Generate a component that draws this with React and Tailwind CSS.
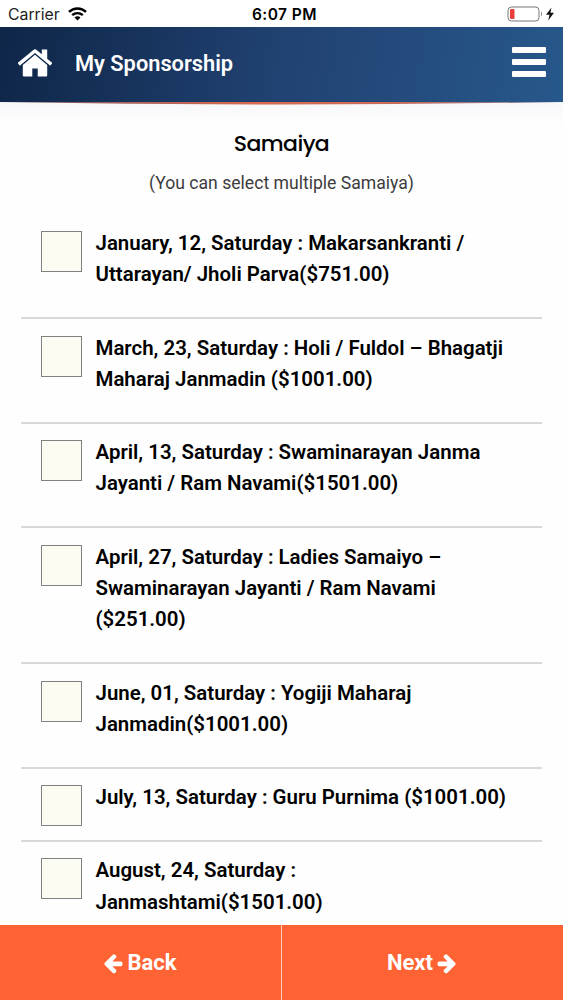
const events = [
  ['January, 12, Saturday : Makarsankranti /', 'Uttarayan/ Jholi Parva($751.00)'],
  ['March, 23, Saturday : Holi / Fuldol – Bhagatji', 'Maharaj Janmadin ($1001.00)'],
  ['April, 13, Saturday : Swaminarayan Janma', 'Jayanti / Ram Navami($1501.00)'],
  ['April, 27, Saturday : Ladies Samaiyo –', 'Swaminarayan Jayanti / Ram Navami', '($251.00)'],
  ['June, 01, Saturday : Yogiji Maharaj', 'Janmadin($1001.00)'],
  ['July, 13, Saturday : Guru Purnima ($1001.00)'],
  ['August, 24, Saturday :', 'Janmashtami($1501.00)'],
];

function ArrowIcon({ className = '' }) {
  return (
    <svg viewBox="0 0 1792 1792" className={`h-[22px] w-[22px] shrink-0 ${className}`} fill="currentColor">
      <path d="M1664 896v128q0 53-32.5 90.5t-84.5 37.5h-704l293 294q38 36 38 90t-38 90l-75 76q-37 37-90 37-52 0-91-37l-651-652q-37-37-37-90 0-52 37-91l651-650q38-38 91-38 52 0 90 38l75 74q38 38 38 91t-38 91l-293 293h704q52 0 84.5 37.5t32.5 90.5z" />
    </svg>
  );
}

function StatusBar() {
  return (
    <div className="flex h-[27px] shrink-0 items-center justify-between bg-white px-2 pt-[2px] font-['Inter',sans-serif] text-black">
      <div className="flex w-[160px] items-center gap-[8px]">
        <span className="text-[15.8px] text-[#222]">Carrier</span>
        <svg width="19" height="14" viewBox="0 0 19 14" fill="none" stroke="currentColor" className="-mt-[2px]">
          <path d="M1 4.9C5.8.3 13.2.3 18 4.9" strokeWidth="2.5" />
          <path d="M4.2 8.2c3-2.8 7.6-2.8 10.6 0" strokeWidth="2.4" />
          <path d="M9.5 13.5 6.5 10.4c1.7-1.6 4.3-1.6 6 0z" fill="currentColor" stroke="none" />
        </svg>
      </div>
      <span className="ml-[6px] text-center text-[15.5px] font-semibold tracking-[0.45px]">6:07 PM</span>
      <div className="-mt-[2px] flex w-[160px] justify-end">
        <svg width="49" height="16" viewBox="0 0 49 16" className="-mr-[1px]">
          <rect x="1" y="1" width="31" height="14" rx="3.5" fill="#fff" stroke="#777" />
          <rect x="3" y="3" width="4.5" height="10" rx="1" fill="#e83e3c" />
          <path d="M34 5.5q2 2.5 0 5z" fill="#777" />
          <path d="M44.5 1.5 39 8.8h3.5l-1.3 5.7 5.8-7.7h-3.6z" fill="#111" />
        </svg>
      </div>
    </div>
  );
}

function Header() {
  return (
    <header className="shrink-0">
      <div className="flex h-[75px] items-center bg-linear-100 from-[#0e2648] via-[#214272] to-[#27588b] pr-[17px] pl-[16px] text-white">
        <svg width="38" height="38" viewBox="0 0 1792 1792" fill="currentColor" className="-mt-[4px]">
          <path d="M1472 992v480q0 26-19 45t-45 19h-384v-384h-256v384h-384q-26 0-45-19t-19-45v-480q0-1 .5-3t.5-3l575-474 575 474q1 2 1 6zm223-69l-62 74q-8 9-21 11h-3q-13 0-21-7l-692-577-692 577q-12 8-24 7-13-2-21-11l-62-74q-8-10-7-23.5t11-21.5l719-599q32-26 76-26t76 26l244 204v-195q0-14 9-23t23-9h192q14 0 23 9t9 23v408l219 182q10 8 11 21.5t-7 23.5z" />
        </svg>
        <h1 className="-mt-[2px] ml-[21px] text-[21.8px] leading-none font-semibold">My Sponsorship</h1>
        <div className="ml-auto flex w-[34px] flex-col gap-[6px] pb-[5px]">
          <div className="h-[6px] rounded-[1px] bg-white" />
          <div className="h-[6px] rounded-[1px] bg-white" />
          <div className="h-[6px] rounded-[1px] bg-white" />
        </div>
      </div>
      <svg width="563" height="22" viewBox="0 0 563 22" className="block">
        <defs>
          <linearGradient id="fade" x1="0" y1="0" x2="0" y2="1">
            <stop offset="0" stopColor="#f7f6f9" />
            <stop offset="1" stopColor="#fefefe" />
          </linearGradient>
          <linearGradient id="accent" x1="0" y1="0" x2="1" y2="0">
            <stop offset="0" stopColor="#5b5565" />
            <stop offset=".22" stopColor="#a7605b" />
            <stop offset=".45" stopColor="#d9694f" />
            <stop offset=".7" stopColor="#c96a58" />
            <stop offset="1" stopColor="#6d7e9c" />
          </linearGradient>
        </defs>
        <rect width="563" height="22" fill="url(#fade)" />
        <path d="M0 0H563Q281 5 0 0z" fill="url(#accent)" />
      </svg>
    </header>
  );
}

export default function App() {
  return (
    <div className="flex h-[1000px] w-[563px] flex-col overflow-hidden bg-[#fefefe] font-['Roboto',sans-serif]">
      <StatusBar />
      <Header />
      <main className="min-h-0 flex-1 overflow-hidden px-[21px]">
        <h2 className="pt-[6px] text-center font-['Poppins','Lato',sans-serif] text-[22px] leading-[28px] font-medium tracking-[-0.6px] text-black">
          Samaiya
        </h2>
        <p className="mt-[12px] text-center text-[17.6px] leading-[26px] text-[#3c3c3c]">(You can select multiple Samaiya)</p>
        <ul className="mt-[18.6px]">
          {events.map((lines) => (
            <li key={lines[0]} className="flex border-b-2 border-[#d9d9d9] pt-[13.4px] pb-[26.6px] pl-[20px]">
              <div className="mt-[3px] -mb-[26px] h-[41px] w-[41px] shrink-0 border border-[#808080] bg-[#fcfcf2]" />
              <div className="ml-[13.5px] text-[20.45px] leading-[31.3px] font-semibold whitespace-nowrap text-black">
                {lines.map((line) => (
                  <div key={line}>{line}</div>
                ))}
              </div>
            </li>
          ))}
        </ul>
      </main>
      <footer className="flex h-[75px] shrink-0 bg-[#ff6333] text-[22px] font-bold text-white">
        <button className="flex w-[282px] items-center justify-center gap-[3px] border-r border-[#f6cdbd] pr-[2px]">
          <ArrowIcon />
          Back
        </button>
        <button className="flex flex-1 items-center justify-center gap-[3px]">
          Next
          <ArrowIcon className="-scale-x-100" />
        </button>
      </footer>
    </div>
  );
}
